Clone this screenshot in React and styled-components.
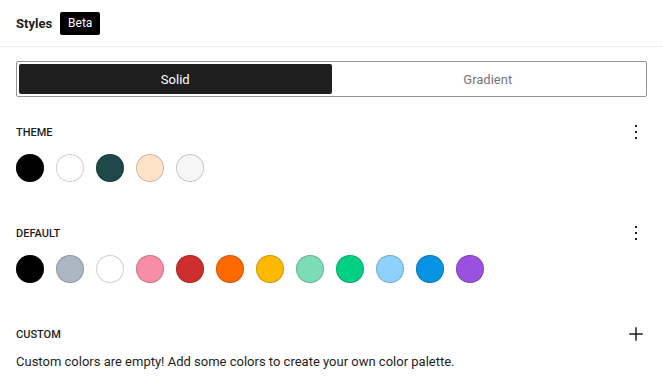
import styled, { createGlobalStyle } from "styled-components";

const GlobalStyle = createGlobalStyle`
  html, body {
    margin: 0;
    padding: 0;
    background: #fff;
  }
  body {
    font-family: Roboto, "Liberation Sans", sans-serif;
    color: #1e1e1e;
  }
`;

const Panel = styled.div`
  width: 663px;
  height: 388px;
  overflow: hidden;
  box-sizing: border-box;
`;

const Header = styled.div`
  height: 47px;
  padding: 0 16px;
  display: flex;
  align-items: center;
  gap: 8px;
  border-bottom: 1px solid #f0f0f0;
  box-sizing: border-box;
`;

const Title = styled.h2`
  margin: 0;
  font-size: 13px;
  font-weight: 700;
  color: #1e1e1e;
`;

const Badge = styled.span`
  background: #000;
  color: #fff;
  font-size: 12px;
  line-height: 23px;
  padding: 0 8px;
  border-radius: 2px;
`;

const Body = styled.div`
  padding: 14px 16px 0;
`;

const Tabs = styled.div`
  height: 36px;
  border: 1px solid #949494;
  border-radius: 2px;
  padding: 2px;
  display: flex;
  box-sizing: border-box;
`;

const Tab = styled.button`
  flex: 1;
  border: 0;
  border-radius: 2px;
  font-family: inherit;
  font-size: 13px;
  background: ${(p) => (p.$active ? "#1e1e1e" : "transparent")};
  color: ${(p) => (p.$active ? "#fff" : "#757575")};
  cursor: pointer;
`;

const Section = styled.section`
  margin-top: ${(p) => p.$top}px;
`;

const SectionHead = styled.div`
  display: flex;
  align-items: center;
  justify-content: space-between;
  height: 24px;
`;

const Label = styled.h3`
  margin: 0;
  font-size: 11px;
  font-weight: 500;
  text-transform: uppercase;
  color: #1e1e1e;
`;

const IconButton = styled.button`
  width: 24px;
  height: 24px;
  border: 0;
  padding: 0;
  margin-right: -1px;
  background: transparent;
  display: flex;
  align-items: center;
  justify-content: center;
  color: #1e1e1e;
`;

const Swatches = styled.div`
  display: flex;
  gap: 12px;
  margin-top: 10px;
`;

const Swatch = styled.button`
  width: 28px;
  height: 28px;
  padding: 0;
  border: 0;
  border-radius: 50%;
  background: ${(p) => p.$color};
  box-shadow: inset 0 0 0 1px rgba(0, 0, 0, 0.18);
`;

const Empty = styled.p`
  margin: 8px 0 0;
  font-size: 13px;
  color: #1e1e1e;
`;

const Kebab = () => (
  <svg width="24" height="24" viewBox="0 0 24 24" fill="currentColor">
    <path d="M13 19h-2v-2h2v2zm0-6h-2v-2h2v2zm0-6h-2V5h2v2z" />
  </svg>
);

const Plus = () => (
  <svg width="24" height="24" viewBox="0 0 24 24" fill="currentColor">
    <path d="M11.25 12.75V18.75H12.75V12.75H18.75V11.25H12.75V5.25H11.25V11.25H5.25V12.75H11.25Z" />
  </svg>
);

const theme = ["#000000", "#ffffff", "#1e4849", "#ffe2c7", "#f6f6f6"];
const defaults = [
  "#000000",
  "#abb8c3",
  "#ffffff",
  "#f78da7",
  "#cf2e2e",
  "#ff6900",
  "#fcb900",
  "#7bdcb5",
  "#00d084",
  "#8ed1fc",
  "#0693e3",
  "#9b51e0",
];

export default function App() {
  return (
    <Panel>
      <GlobalStyle />
      <Header>
        <Title>Styles</Title>
        <Badge>Beta</Badge>
      </Header>
      <Body>
        <Tabs>
          <Tab $active>Solid</Tab>
          <Tab>Gradient</Tab>
        </Tabs>

        <Section $top={23}>
          <SectionHead>
            <Label>Theme</Label>
            <IconButton aria-label="Theme options">
              <Kebab />
            </IconButton>
          </SectionHead>
          <Swatches>
            {theme.map((c) => (
              <Swatch key={c} $color={c} />
            ))}
          </Swatches>
        </Section>

        <Section $top={39}>
          <SectionHead>
            <Label>Default</Label>
            <IconButton aria-label="Default options">
              <Kebab />
            </IconButton>
          </SectionHead>
          <Swatches>
            {defaults.map((c) => (
              <Swatch key={c} $color={c} />
            ))}
          </Swatches>
        </Section>

        <Section $top={39}>
          <SectionHead>
            <Label>Custom</Label>
            <IconButton aria-label="Add color">
              <Plus />
            </IconButton>
          </SectionHead>
          <Empty>Custom colors are empty! Add some colors to create your own color palette.</Empty>
        </Section>
      </Body>
    </Panel>
  );
}
